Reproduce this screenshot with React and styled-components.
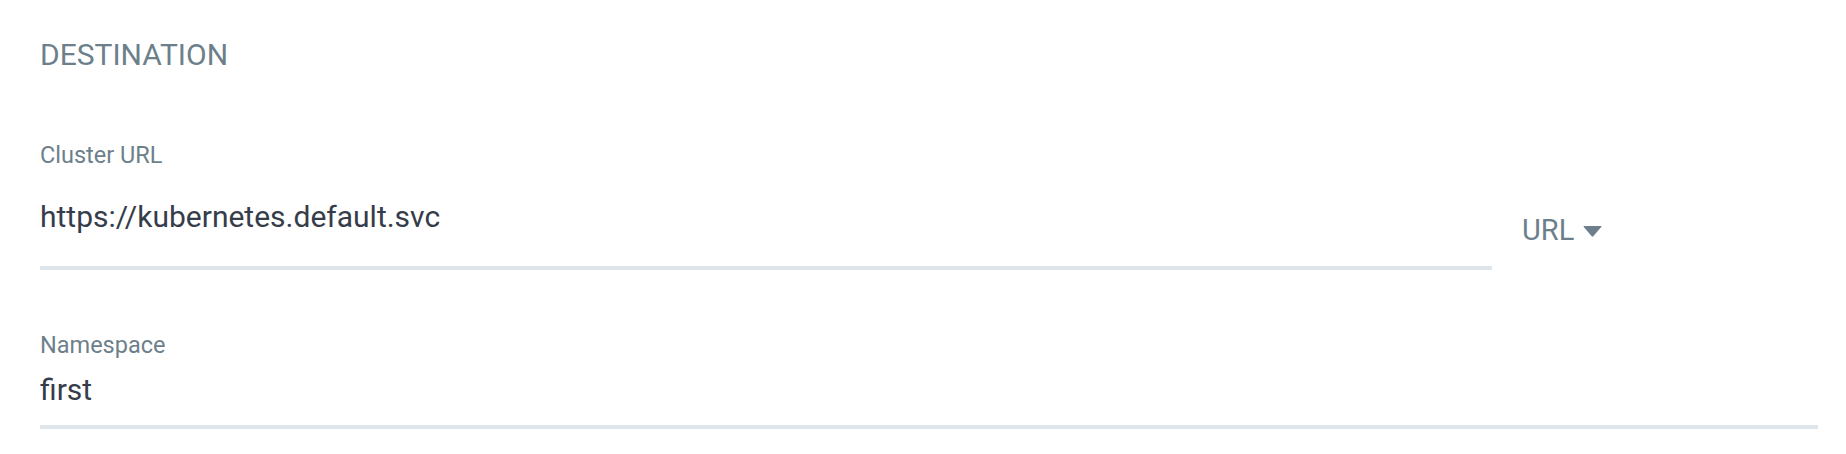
import React from "react";
import styled, { createGlobalStyle } from "styled-components";

const GlobalStyle = createGlobalStyle`
  html, body { margin: 0; padding: 0; background: #ffffff; }
  body { font-family: Roboto, "Liberation Sans", sans-serif; }
`;

const Page = styled.div`
  padding: 37px 28px 0 40px;
  font-family: Roboto, "Liberation Sans", sans-serif;
`;

const SectionTitle = styled.div`
  font-size: 30px;
  line-height: 36px;
  color: #6d7f8b;
  margin-bottom: 68px;
`;

const Row = styled.div`
  display: grid;
  grid-template-columns: 1fr 296px;
  column-gap: 30px;
  align-items: start;
  margin-bottom: 61px;
`;

const Field = styled.div`
  display: flex;
  flex-direction: column;
  border-bottom: 4px solid #dee6eb;
  padding-bottom: ${(p) => p.$pb}px;
`;

const Label = styled.label`
  font-size: 23.5px;
  line-height: 28px;
  color: #6d7f8b;
`;

const Value = styled.div`
  font-size: 30px;
  line-height: 36px;
  color: #363c4a;
  margin-top: ${(p) => p.$mt}px;
`;

const Dropdown = styled.div`
  display: flex;
  align-items: center;
  gap: 9px;
  margin-top: 71px;
  font-size: 29px;
  line-height: 36px;
  color: #6d7f8b;
  cursor: pointer;
`;

const Caret = () => (
  <svg width="19" height="11" viewBox="0 0 19 11" style={{ marginTop: 2 }}>
    <path d="M1.2 0 H17.8 Q19 0 18.2 1 L10.3 10.3 Q9.5 11 8.7 10.3 L0.8 1 Q0 0 1.2 0 Z" fill="#6d7f8b" />
  </svg>
);

export default function App() {
  return (
    <>
      <GlobalStyle />
      <Page>
        <SectionTitle>DESTINATION</SectionTitle>
        <Row>
          <Field $pb={31}>
            <Label>Cluster URL</Label>
            <Value $mt={29.5}>https://kubernetes.default.svc</Value>
          </Field>
          <Dropdown>
            URL <Caret />
          </Dropdown>
        </Row>
        <Field $pb={17}>
          <Label>Namespace</Label>
          <Value $mt={13}>first</Value>
        </Field>
      </Page>
    </>
  );
}
